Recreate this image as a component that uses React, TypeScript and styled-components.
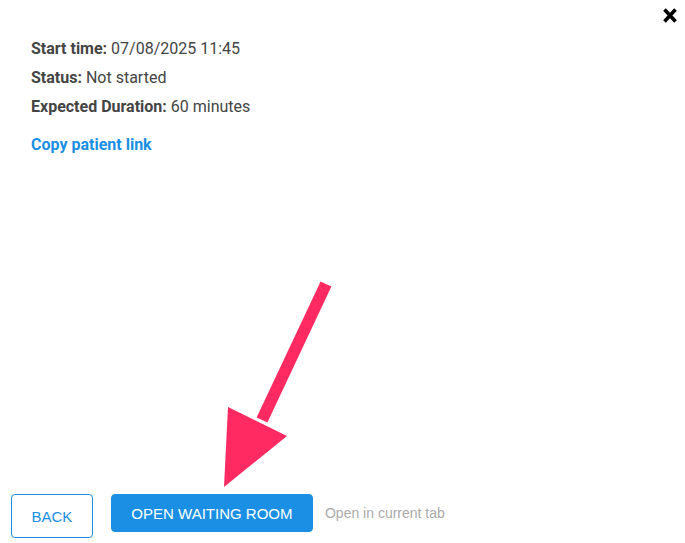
import styled, { createGlobalStyle } from "styled-components";

const GlobalStyle = createGlobalStyle`
  html, body {
    margin: 0;
    padding: 0;
    background: #fff;
  }
  body {
    font-family: Roboto, "Liberation Sans", Arial, sans-serif;
  }
`;

const StyledPage = styled.div`
  position: relative;
  display: flex;
  flex-direction: column;
  height: 543px;
  box-sizing: border-box;
  padding: 0 0 5px 11px;
  overflow: hidden;
`;

const StyledHeader = styled.div`
  display: flex;
  justify-content: flex-end;
  padding: 8px 8px 0 0;
`;

const StyledClose = styled.button`
  appearance: none;
  border: none;
  background: transparent;
  padding: 0;
  width: 14px;
  height: 15px;
  cursor: pointer;
  display: flex;
`;

const StyledDetails = styled.div`
  display: flex;
  flex-direction: column;
  padding-left: 20px;
  margin-top: 11px;
  flex-grow: 1;
`;

const StyledLine = styled.p`
  margin: 0;
  font-size: 16px;
  line-height: 29px;
  color: #444;
`;

const StyledLabel = styled.strong`
  font-weight: 700;
`;

const StyledLink = styled.a`
  margin-top: 14px;
  font-size: 16px;
  line-height: 20px;
  font-weight: 700;
  color: #1a8fe3;
  text-decoration: none;
  cursor: pointer;
`;

const StyledFooter = styled.div`
  display: flex;
  align-items: flex-start;
  gap: 18px;
`;

const StyledButton = styled.button<{ $primary?: boolean }>`
  font-family: "Liberation Sans", Arial, sans-serif;
  font-size: 15px;
  border-radius: 4px;
  border: 1px solid #1a8fe3;
  background: ${(p) => (p.$primary ? "#1a8fe3" : "#fff")};
  color: ${(p) => (p.$primary ? "#fff" : "#1a8fe3")};
  height: ${(p) => (p.$primary ? "38px" : "44px")};
  padding: 0 19.5px;
  text-transform: uppercase;
  cursor: pointer;
`;

const StyledHint = styled.span`
  font-family: "Liberation Sans", Arial, sans-serif;
  font-size: 14px;
  color: #aaa;
  line-height: 38px;
  margin-left: -6px;
`;

const StyledArrow = styled.svg`
  position: absolute;
  left: 215px;
  top: 275px;
  pointer-events: none;
`;

export default function App() {
  return (
    <StyledPage>
      <GlobalStyle />
      <StyledHeader>
        <StyledClose type="button" aria-label="Close">
          <svg width="14" height="15" viewBox="0 0 14 15">
            <path d="M1.5 1.5 L12.5 13.5 M12.5 1.5 L1.5 13.5" stroke="#000" strokeWidth="3.6" />
          </svg>
        </StyledClose>
      </StyledHeader>
      <StyledDetails>
        <StyledLine>
          <StyledLabel>Start time:</StyledLabel> 07/08/2025 11:45
        </StyledLine>
        <StyledLine>
          <StyledLabel>Status:</StyledLabel> Not started
        </StyledLine>
        <StyledLine>
          <StyledLabel>Expected Duration:</StyledLabel> 60 minutes
        </StyledLine>
        <StyledLink>Copy patient link</StyledLink>
      </StyledDetails>
      <StyledFooter>
        <StyledButton type="button">Back</StyledButton>
        <StyledButton type="button" $primary>
          Open waiting room
        </StyledButton>
        <StyledHint>Open in current tab</StyledHint>
      </StyledFooter>
      <StyledArrow width="125" height="220" viewBox="0 0 125 220">
        <polygon points="105.6,6.4 116.4,11.6 52.4,147.6 41.6,142.4" fill="#ff2a62" />
        <polygon points="13,132 72,161 9,212" fill="#ff2a62" />
      </StyledArrow>
    </StyledPage>
  );
}
